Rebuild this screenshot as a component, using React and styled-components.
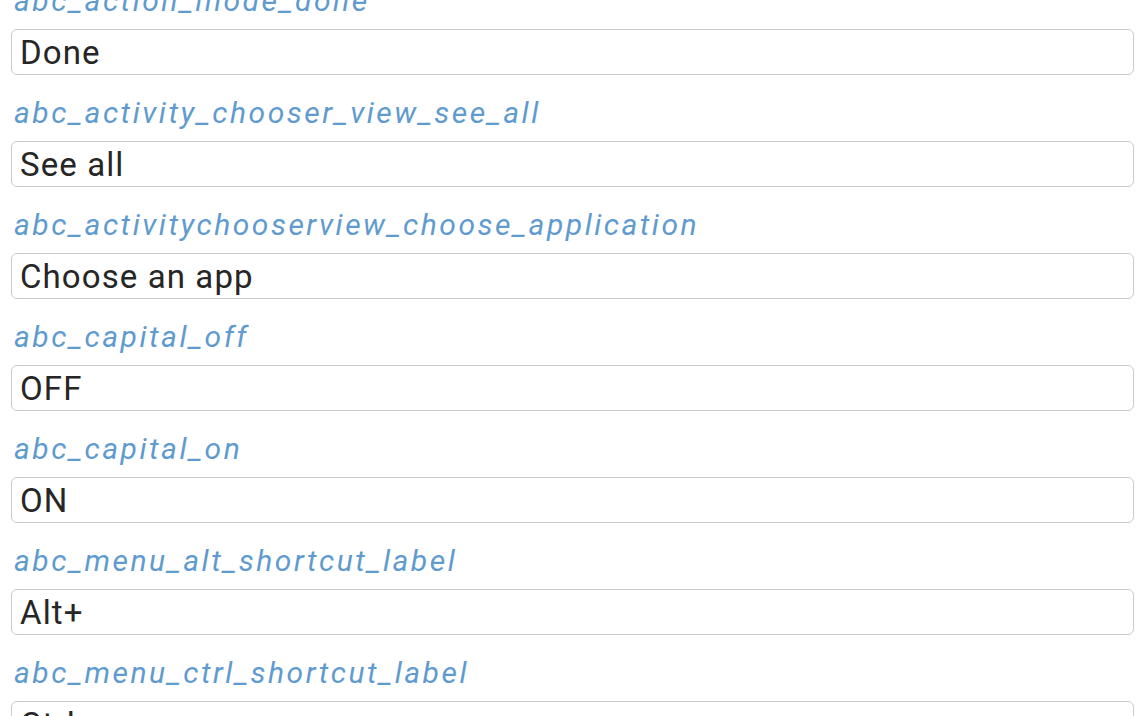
import styled, { createGlobalStyle } from "styled-components";

const strings = [
    { key: "abc_action_mode_done", value: "Done" },
    { key: "abc_activity_chooser_view_see_all", value: "See all" },
    { key: "abc_activitychooserview_choose_application", value: "Choose an app" },
    { key: "abc_capital_off", value: "OFF" },
    { key: "abc_capital_on", value: "ON" },
    { key: "abc_menu_alt_shortcut_label", value: "Alt+" },
    { key: "abc_menu_ctrl_shortcut_label", value: "Ctrl+" },
];

const GlobalStyle = createGlobalStyle`
    html, body {
        margin: 0;
        height: 716px;
        overflow: hidden;
        background: #ffffff;
    }
    body {
        font-family: Roboto, "Liberation Sans", sans-serif;
    }
`;

export default function App() {
    return (
        <>
            <GlobalStyle />
            <List>
                {strings.map((s) => (
                    <Entry key={s.key}>
                        <Key>{s.key}</Key>
                        <Field readOnly value={s.value} />
                    </Entry>
                ))}
            </List>
        </>
    );
}

const List = styled.div`
    display: flex;
    flex-direction: column;
    gap: 22px;
    margin-top: -15px;
    padding: 0 12px 0 11px;
`;

const Entry = styled.div`
    display: flex;
    flex-direction: column;
    gap: 12px;
`;

const Key = styled.div`
    font-family: Roboto, "Liberation Sans", sans-serif;
    font-style: italic;
    font-size: 30px;
    line-height: 32px;
    letter-spacing: 2.5px;
    color: #5f9bcf;
    padding-left: 3px;
    white-space: nowrap;
`;

const Field = styled.input`
    box-sizing: border-box;
    width: 100%;
    height: 46px;
    margin: 0;
    padding: 0 8px;
    border: 1.5px solid #c6ccd4;
    border-radius: 6px;
    background: #fff;
    font-family: Roboto, "Liberation Sans", sans-serif;
    font-size: 33px;
    letter-spacing: 1.1px;
    color: #262626;
    outline: none;
`;
